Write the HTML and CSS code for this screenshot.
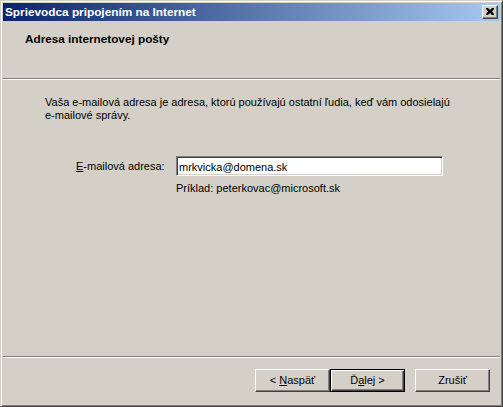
FILE: index.html
```html
<!DOCTYPE html>
<html lang="sk">
<head>
<meta charset="utf-8">
<title>Sprievodca pripojením na Internet</title>
<link rel="stylesheet" href="styles.css">
</head>
<body>
<div class="window">
  <div class="titlebar">
    <span class="title">Sprievodca pripojením na Internet</span>
    <button class="close" aria-label="Zavrieť">
      <svg width="8" height="7" viewBox="0 0 8 7"><path d="M0 0h2l2 2 2-2h2v1L6 3.5 8 6v1H6L4 5 2 7H0V6l2-2.5L0 1z" fill="#000"/></svg>
    </button>
  </div>
  <div class="header">
    <div class="heading">Adresa internetovej pošty</div>
  </div>
  <div class="sep"></div>
  <div class="body">
    <p class="intro">Vaša e-mailová adresa je adresa, ktorú používajú ostatní ľudia, keď vám odosielajú <span class="nowrap">e-mailové</span> správy.</p>
    <div class="row">
      <label class="label" for="email"><u>E</u>-mailová adresa:</label>
      <input class="field" id="email" type="text" value="mrkvicka@domena.sk">
    </div>
    <div class="example">Príklad: peterkovac@microsoft.sk</div>
  </div>
  <div class="sep"></div>
  <div class="footer">
    <button class="btn">&lt; <u>N</u>aspäť</button>
    <button class="btn default">Ď<u>a</u>lej &gt;</button>
    <button class="btn cancel">Zrušiť</button>
  </div>
</div>
</body>
</html>
```

FILE: styles.css
```css
* { box-sizing: border-box; }
html, body {
  margin: 0;
  padding: 0;
  background: #d4d0c8;
}
body {
  font-family: Tahoma, "Liberation Sans", Arial, sans-serif;
  font-size: 11px;
  line-height: 13px;
  color: #000;
}
.window {
  width: 503px;
  height: 407px;
  background: #d4d0c8;
  border: 1px solid;
  border-color: #d4d0c8 #404040 #404040 #d4d0c8;
  box-shadow: inset 1px 1px #fff, inset -1px -1px #808080;
  padding: 2px;
  display: flex;
  flex-direction: column;
}
.titlebar {
  height: 18px;
  flex: none;
  background: linear-gradient(to right, #0a246a, #a6caf0);
  display: flex;
  align-items: center;
  justify-content: space-between;
  padding: 0 2px 0 2px;
}
.title {
  color: #fff;
  font-weight: bold;
  font-size: 11.8px;
}
.close {
  width: 16px;
  height: 14px;
  padding: 0;
  margin: 0;
  background: #d4d0c8;
  border: 1px solid;
  border-color: #fff #404040 #404040 #fff;
  box-shadow: inset -1px -1px #808080;
  display: flex;
  align-items: center;
  justify-content: center;
}
.close svg { display: block; margin: 0 1px 1px 0; }
.header {
  height: 57px;
  flex: none;
  padding: 11px 0 0 22px;
}
.heading {
  font-weight: bold;
  font-size: 11.75px;
}
.sep {
  height: 2px;
  flex: none;
  border-top: 1px solid #808080;
  border-bottom: 1px solid #fff;
}
.body {
  flex: 1;
  padding: 16px 20px 0 42px;
}
.intro {
  margin: 0;
  width: 436px;
}
.nowrap { white-space: nowrap; }
.row {
  display: flex;
  align-items: center;
  margin-top: 34px;
  padding-left: 31px;
}
.label {
  width: 100px;
  flex: none;
}
.field {
  width: 267px;
  height: 20px;
  margin: 0;
  padding: 1px 2px 0;
  font: inherit;
  color: #000;
  background: #fff;
  border: 1px solid;
  border-color: #808080 #fff #fff #808080;
  box-shadow: inset 1px 1px #404040, inset -1px -1px #d4d0c8;
  outline: none;
}
.example {
  margin-top: 6px;
  padding-left: 131px;
}
.footer {
  height: 46px;
  flex: none;
  display: flex;
  align-items: flex-start;
  padding: 11px 0 0 252px;
}
.btn {
  width: 75px;
  height: 23px;
  margin: 0;
  padding: 0;
  font: inherit;
  color: #000;
  background: #d4d0c8;
  border: 1px solid;
  border-color: #fff #404040 #404040 #fff;
  box-shadow: inset -1px -1px #808080, inset 1px 1px #d4d0c8;
}
.btn.default {
  border: 1px solid #000;
  box-shadow: inset 1px 1px #fff, inset -1px -1px #404040, inset -2px -2px #808080;
}
.btn.cancel {
  margin-left: 10px;
}
u { text-decoration: underline; text-underline-offset: 1px; }
```
